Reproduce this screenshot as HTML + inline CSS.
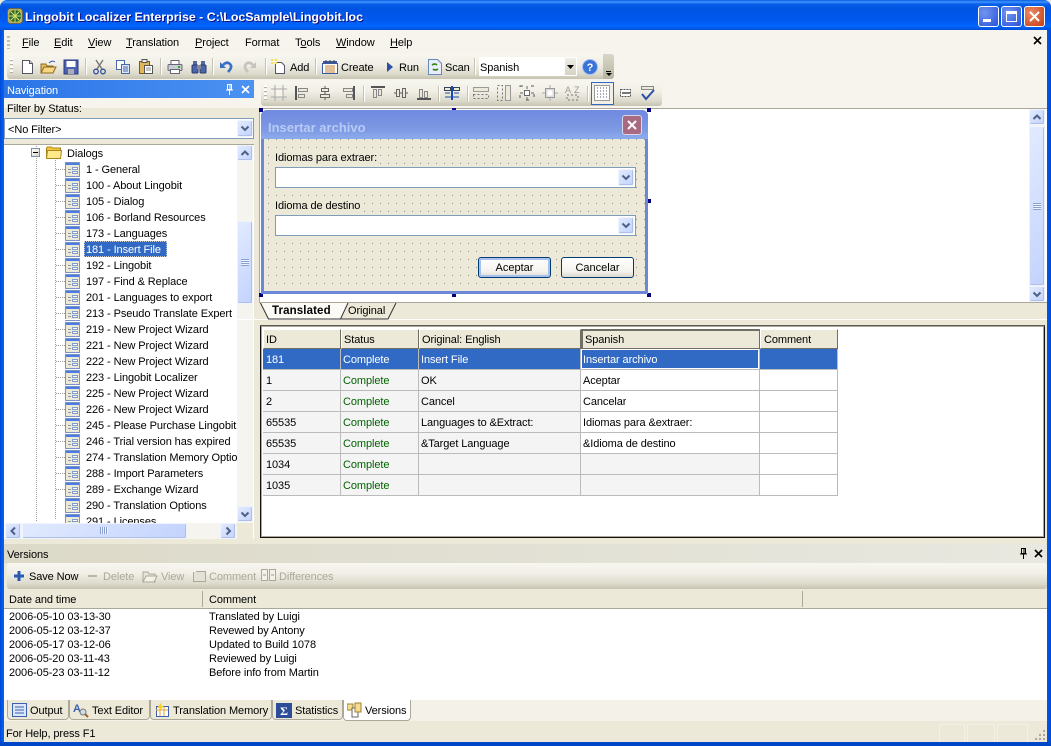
<!DOCTYPE html>
<html><head><meta charset="utf-8"><title>Lingobit Localizer Enterprise</title>
<style>
html,body{margin:0;padding:0;background:#ece9d8}
#w{position:relative;width:1051px;height:746px;overflow:hidden;background:#ece9d8;font-family:"Liberation Sans",sans-serif;font-size:11px;color:#000}
#w div,#w svg{position:absolute}
.t{white-space:nowrap;line-height:14px;height:14px;font-size:11px;letter-spacing:-.09px;margin-top:1px}
.c{white-space:nowrap;line-height:20px;height:20px;font-size:11px;letter-spacing:-.09px;overflow:hidden;box-sizing:border-box;padding-left:3px;margin-top:1px}
.g{color:#006400}.d{color:#aca899}
.sep{width:1px;background:#c5c2b8;border-right:1px solid #fff}
.tb{background:linear-gradient(#f7f6f0,#f1efe6 40%,#dcdacb 80%,#c6c3b2);border-radius:3px}
.sb{width:16px;height:16px;box-sizing:border-box;background:linear-gradient(135deg,#e1eafe,#c3d3fd);border:1px solid #eef3fe;border-radius:2px;box-shadow:inset -1px -1px 0 #aebfe8}
.th{background:#ece9d8;height:20px;box-sizing:border-box;border-top:1px solid #fff;border-left:1px solid #fff;border-right:1px solid #716f64;border-bottom:1px solid #716f64;line-height:19px;padding:1px 0 0 2px;white-space:nowrap;font-size:11px;letter-spacing:-.09px}
.h{width:4px;height:4px;background:#00007f}
.cb{box-sizing:border-box;background:#fff;border:1px solid #7f9db9}
.btn{box-sizing:border-box;border:1px solid #003c74;border-radius:3px;background:linear-gradient(#fff,#f4f3ee 70%,#dcd8ce);text-align:center;line-height:19px;padding-top:1px;white-space:nowrap;font-size:11px}
.di{left:65px;width:15px;height:15px;box-sizing:border-box;border:1px solid #7a94c4;background:
linear-gradient(#4a7ede,#4a7ede) 0 0/100% 2px no-repeat,
linear-gradient(#999,#999) 2px 6px/3px 1px no-repeat,
linear-gradient(#999,#999) 2px 9px/3px 1px no-repeat,
linear-gradient(#fff,#fff) 7px 5px/4px 1px no-repeat,
linear-gradient(#fff,#fff) 7px 9px/4px 1px no-repeat,
linear-gradient(#7f9cd0,#7f9cd0) 6px 4px/6px 3px no-repeat,
linear-gradient(#7f9cd0,#7f9cd0) 6px 8px/6px 3px no-repeat,#ece9d8}
.sf{top:724px;height:18px;box-sizing:border-box;border:1px solid #f3f1e6;border-bottom:none}
</style></head><body>
<svg width="0" height="0" style="position:absolute"><defs>
<symbol id="dn" viewBox="0 0 16 16"><path d="M4.5 6.5L8 10l3.5-3.5" fill="none" stroke="#4d6185" stroke-width="2"/></symbol>
<symbol id="up" viewBox="0 0 16 16"><path d="M4.5 10L8 6.5l3.5 3.5" fill="none" stroke="#4d6185" stroke-width="2"/></symbol>
<symbol id="lf" viewBox="0 0 16 16"><path d="M10 4.5L6.5 8l3.5 3.5" fill="none" stroke="#4d6185" stroke-width="2"/></symbol>
<symbol id="rt" viewBox="0 0 16 16"><path d="M6.5 4.5L10 8l-3.5 3.5" fill="none" stroke="#4d6185" stroke-width="2"/></symbol>
<symbol id="x" viewBox="0 0 9 9"><path d="M1 1l7 7M8 1L1 8" stroke="#000" stroke-width="1.6"/></symbol>
<symbol id="pin" viewBox="0 0 9 11"><path d="M2.5 .5h4v5h-4zM5 1v4M1 6h7M4.5 6v5" fill="none" stroke="#000"/></symbol>
</defs></svg>
<div id="w">
<!-- title bar -->
<div style="left:0;top:0;width:1051px;height:30px;background:linear-gradient(#0a5ae0,#3d95ff 2px,#0a5fe8 4px,#0054e3 8px,#0058ee 20px,#0066ff 26px,#0050d8 30px);border-radius:7px 7px 0 0"></div>
<svg style="left:7px;top:8px" width="16" height="16" viewBox="0 0 16 16"><rect x=".5" y=".5" width="15" height="15" rx="3" fill="#b8b060" stroke="#665"/><circle cx="8" cy="8" r="6" fill="#2a6a2a"/><path d="M8 2v12M2 8h12M4 4l8 8M12 4l-8 8" stroke="#d8e070"/></svg>
<div style="left:25px;top:9px;color:#fff;font-weight:bold;font-size:12.4px;line-height:16px;white-space:nowrap;text-shadow:1px 1px 0 #0f1089">Lingobit Localizer Enterprise - C:\LocSample\Lingobit.loc</div>
<div style="left:978px;top:6px;width:21px;height:21px;box-sizing:border-box;border:1px solid #fff;border-radius:3px;background:radial-gradient(circle at 30% 30%,#6f95f0,#2a52d8)"></div>
<div style="left:983px;top:19px;width:8px;height:3px;background:#fff"></div>
<div style="left:1001px;top:6px;width:21px;height:21px;box-sizing:border-box;border:1px solid #fff;border-radius:3px;background:radial-gradient(circle at 30% 30%,#6f95f0,#2a52d8)"></div>
<div style="left:1006px;top:11px;width:11px;height:11px;box-sizing:border-box;border:1px solid #fff;border-top-width:3px"></div>
<div style="left:1024px;top:6px;width:21px;height:21px;box-sizing:border-box;border:1px solid #fff;border-radius:3px;background:radial-gradient(circle at 30% 30%,#eb8a68,#c83c10)"></div>
<svg style="left:1029px;top:11px" width="11" height="11" viewBox="0 0 11 11"><path d="M1 1l9 9M10 1l-9 9" stroke="#fff" stroke-width="2"/></svg>
<!-- borders -->
<div style="left:0;top:30px;width:4px;height:716px;background:linear-gradient(90deg,#0048d0,#0058ee 50%,#0a60f0)"></div>
<div style="left:1047px;top:30px;width:4px;height:716px;background:linear-gradient(90deg,#0058ee,#0048d0)"></div>
<div style="left:0;top:742px;width:1051px;height:4px;background:#0046c8"></div>
<!-- menu area -->
<div style="left:4px;top:30px;width:1043px;height:78px;background:#f6f4ec"></div>
<div style="left:7px;top:36px;width:3px;height:13px;background:repeating-linear-gradient(#c2bfae 0 2px,transparent 2px 4px)"></div>
<div class="t" style="left:22px;top:35px"><u>F</u>ile</div>
<div class="t" style="left:54px;top:35px"><u>E</u>dit</div>
<div class="t" style="left:88px;top:35px"><u>V</u>iew</div>
<div class="t" style="left:126px;top:35px"><u>T</u>ranslation</div>
<div class="t" style="left:195px;top:35px"><u>P</u>roject</div>
<div class="t" style="left:245px;top:35px">Format</div>
<div class="t" style="left:295px;top:35px">T<u>o</u>ols</div>
<div class="t" style="left:336px;top:35px"><u>W</u>indow</div>
<div class="t" style="left:390px;top:35px"><u>H</u>elp</div>
<svg style="left:1033px;top:36px" width="9" height="9"><use href="#x"/></svg>
<!-- main toolbar -->
<div class="tb" style="left:7px;top:54px;width:607px;height:25px"></div>
<div style="left:603px;top:54px;width:11px;height:25px;background:linear-gradient(#d8d6c6,#b8b5a2);border-radius:0 3px 3px 0"></div>
<div style="left:606px;top:71px;width:5px;height:1px;background:#000"></div>
<svg style="left:606px;top:73px" width="6" height="4"><path d="M0 0h6L3 3z"/></svg>
<div style="left:10px;top:58px;width:3px;height:16px;background:repeating-linear-gradient(#fff 0 2px,#b5b2a0 2px 3px,transparent 3px 4px)"></div>
<svg style="left:19px;top:59px" width="16" height="16"><path d="M3.5 1.5h7l3 3v10h-10z" fill="#fff" stroke="#556"/><path d="M10.5 1.5v3h3" fill="#dde" stroke="#556"/></svg>
<svg style="left:40px;top:59px" width="17" height="16"><path d="M1 14V5h5l1 2h6v7z" fill="#e8c060" stroke="#8a6a20"/><path d="M1 14l3-6h12l-3 6z" fill="#f6d680" stroke="#8a6a20"/><path d="M9 4q3-3 6-1" fill="none" stroke="#3868c0"/></svg>
<svg style="left:63px;top:59px" width="16" height="16"><rect x="1" y="1" width="14" height="14" fill="#4a62b0" stroke="#2a3a80"/><rect x="3.5" y="2" width="9" height="6" fill="#fff"/><rect x="5" y="10" width="6" height="5" fill="#aab"/></svg>
<div class="sep" style="left:85px;top:58px;height:17px"></div>
<svg style="left:92px;top:59px" width="15" height="16"><path d="M4 1l6 9M11 1l-6 9" stroke="#777" stroke-width="1.4"/><circle cx="4" cy="12.5" r="2.3" fill="none" stroke="#3050a0" stroke-width="1.3"/><circle cx="11" cy="12.5" r="2.3" fill="none" stroke="#3050a0" stroke-width="1.3"/></svg>
<svg style="left:115px;top:59px" width="16" height="16"><rect x="1.5" y="1.5" width="8" height="9" fill="#fff" stroke="#4868a8"/><rect x="6.5" y="5.5" width="8" height="9" fill="#dfe8fa" stroke="#4868a8"/><path d="M8 8h5M8 10h5M8 12h5" stroke="#4868a8"/></svg>
<svg style="left:138px;top:58px" width="16" height="17"><rect x="1.5" y="3.5" width="10" height="12" fill="#e0b858" stroke="#7a5a18"/><rect x="4" y="1.5" width="5" height="3" fill="#eee" stroke="#555"/><rect x="6.5" y="7.5" width="8" height="8" fill="#fff" stroke="#555"/><path d="M8 10h5M8 12h5" stroke="#888"/></svg>
<div class="sep" style="left:160px;top:58px;height:17px"></div>
<svg style="left:167px;top:59px" width="16" height="16"><path d="M4 5V1.5h8V5" fill="#fff" stroke="#667"/><rect x="1" y="5.5" width="14" height="6" rx="1" fill="#c8ccd4" stroke="#667"/><rect x="3.5" y="10.5" width="9" height="4" fill="#fff" stroke="#667"/><rect x="11" y="7" width="2" height="2" fill="#2a2"/></svg>
<svg style="left:191px;top:59px" width="16" height="16"><rect x="2" y="2" width="4" height="4" fill="#556a98"/><rect x="10" y="2" width="4" height="4" fill="#556a98"/><rect x="1" y="6" width="6" height="8" rx="1" fill="#4a66a8" stroke="#2a3a70"/><rect x="9" y="6" width="6" height="8" rx="1" fill="#4a66a8" stroke="#2a3a70"/><rect x="6" y="6" width="4" height="4" fill="#889"/></svg>
<div class="sep" style="left:212px;top:58px;height:17px"></div>
<svg style="left:220px;top:59px" width="14" height="15"><path d="M3 6q4-4 7-1t-2 8" fill="none" stroke="#3870c8" stroke-width="2.6"/><path d="M0 3v6h6z" fill="#3870c8"/></svg>
<svg style="left:242px;top:59px" width="14" height="15"><path d="M11 6q-4-4-7-1t2 8" fill="none" stroke="#c4c4bc" stroke-width="2.6"/><path d="M14 3v6H8z" fill="#c4c4bc"/></svg>
<div class="sep" style="left:265px;top:58px;height:17px"></div>
<svg style="left:271px;top:59px" width="16" height="16"><path d="M4.5 3.5h6l3 3v8h-9z" fill="#fff" stroke="#556"/><path d="M0 0h6v5H0z" fill="#f4e060"/><path d="M3 0v5M0 2.5h6" stroke="#fff"/></svg>
<div class="t" style="left:290px;top:60px">Add</div>
<div class="sep" style="left:315px;top:58px;height:17px"></div>
<svg style="left:322px;top:60px" width="16" height="14"><rect x=".5" y="3.5" width="15" height="10" fill="#fff" stroke="#3a5aa8"/><rect x="1" y="1" width="14" height="3" fill="#3a5aa8"/><path d="M3 6h10M3 8h10M3 10h10M3 12h10" stroke="#c08030"/><path d="M4 0v3M8 0v3M12 0v3" stroke="#444"/></svg>
<div class="t" style="left:341px;top:60px">Create</div>
<svg style="left:386px;top:61px" width="8" height="12"><path d="M1 1l6 5-6 5z" fill="#2a50a8"/></svg>
<div class="t" style="left:399px;top:60px">Run</div>
<svg style="left:428px;top:59px" width="14" height="16"><path d="M.5.5h9l4 4v11H.5z" fill="#e8eefc" stroke="#6888b8"/><path d="M4 6q3-2 5 0M10 10q-3 2-5 0" fill="none" stroke="#3a8a18" stroke-width="1.8"/></svg>
<div class="t" style="left:445px;top:60px">Scan</div>
<div class="sep" style="left:474px;top:58px;height:17px"></div>
<div style="left:479px;top:57px;width:98px;height:19px;background:#fff"></div>
<div style="left:565px;top:58px;width:11px;height:17px;background:linear-gradient(#f0efe6,#d6d3c4)"></div>
<svg style="left:567px;top:65px" width="7" height="4"><path d="M0 0h7L3.5 4z"/></svg>
<div class="t" style="left:480px;top:60px">Spanish</div>
<svg style="left:582px;top:59px" width="16" height="16"><circle cx="8" cy="8" r="7.5" fill="#3a74d8" stroke="#a8c0ee"/><text x="8" y="12" font-size="11" font-weight="bold" fill="#fff" text-anchor="middle" font-family="Liberation Sans">?</text></svg>
<!-- design toolbar -->
<div class="tb" style="left:261px;top:81px;width:401px;height:25px"></div>
<div style="left:264px;top:85px;width:3px;height:16px;background:repeating-linear-gradient(#fff 0 2px,#b5b2a0 2px 3px,transparent 3px 4px)"></div>
<svg style="left:271px;top:85px" width="16" height="16"><rect x="4" y="4" width="8" height="8" fill="#f6f4ec" stroke="#777"/><path d="M0 4h16M0 12h16M4 0v16M12 0v16" stroke="#aaa"/></svg>
<svg style="left:294px;top:85px" width="16" height="16"><path d="M2 1v14" stroke="#555" stroke-width="2"/><rect x="4.5" y="3.5" width="9" height="3" fill="#ece9d8" stroke="#888"/><rect x="4.5" y="9.5" width="6" height="3" fill="#ece9d8" stroke="#888"/></svg>
<svg style="left:317px;top:85px" width="16" height="16"><path d="M8 1v14" stroke="#555"/><rect x="4.5" y="3.5" width="7" height="3" fill="#ece9d8" stroke="#666"/><rect x="3.5" y="9.5" width="9" height="3" fill="#ece9d8" stroke="#666"/></svg>
<svg style="left:340px;top:85px" width="16" height="16"><path d="M14 1v14" stroke="#555" stroke-width="2"/><rect x="3.5" y="3.5" width="9" height="3" fill="#ece9d8" stroke="#888"/><rect x="6.5" y="9.5" width="6" height="3" fill="#ece9d8" stroke="#888"/></svg>
<div class="sep" style="left:363px;top:86px;height:16px"></div>
<svg style="left:370px;top:85px" width="16" height="16"><path d="M1 2h14" stroke="#555" stroke-width="2"/><rect x="3.5" y="4.5" width="3" height="8" fill="#ece9d8" stroke="#888"/><rect x="8.5" y="4.5" width="3" height="6" fill="#ece9d8" stroke="#888"/></svg>
<svg style="left:393px;top:85px" width="16" height="16"><path d="M1 8h14" stroke="#555"/><rect x="3.5" y="4.5" width="3" height="7" fill="#ece9d8" stroke="#666"/><rect x="9.5" y="3.5" width="3" height="9" fill="#ece9d8" stroke="#666"/></svg>
<svg style="left:416px;top:85px" width="16" height="16"><path d="M1 14h14" stroke="#555" stroke-width="2"/><rect x="3.5" y="4.5" width="3" height="8" fill="#ece9d8" stroke="#888"/><rect x="8.5" y="6.5" width="3" height="6" fill="#ece9d8" stroke="#888"/></svg>
<div class="sep" style="left:438px;top:86px;height:16px"></div>
<svg style="left:444px;top:85px" width="16" height="16"><rect x=".5" y="2.5" width="6" height="3" fill="#ece9d8" stroke="#345"/><rect x="9.5" y="2.5" width="6" height="3" fill="#ece9d8" stroke="#345"/><path d="M8 1v14" stroke="#1a4ab0" stroke-width="2"/><path d="M1 8h5M10 8h5M1 12h14" stroke="#1a4ab0"/></svg>
<div class="sep" style="left:467px;top:86px;height:16px"></div>
<svg style="left:473px;top:85px" width="16" height="16"><rect x=".5" y="2.5" width="15" height="4" fill="#ece9d8" stroke="#999"/><rect x=".5" y="9.5" width="15" height="4" fill="none" stroke="#777" stroke-dasharray="2 2"/></svg>
<svg style="left:496px;top:85px" width="16" height="16"><rect x="9.5" y=".5" width="5" height="15" fill="#ece9d8" stroke="#999"/><rect x="1.5" y=".5" width="5" height="15" fill="none" stroke="#777" stroke-dasharray="2 2"/></svg>
<svg style="left:519px;top:85px" width="16" height="16"><rect x="1" y="1" width="14" height="14" fill="none" stroke="#555" stroke-dasharray="3 8"/><rect x="5.5" y="5.5" width="5" height="5" fill="#fff" stroke="#666"/><path d="M8 1v3M8 12v3M1 8h3M12 8h3" stroke="#666"/></svg>
<svg style="left:542px;top:85px" width="16" height="16"><rect x="3.5" y="3.5" width="9" height="9" fill="#ddd" stroke="#999"/><rect x="5.5" y="5.5" width="5" height="5" fill="#fff"/><path d="M8 0v3M8 13v3M0 8h3M13 8h3" stroke="#aaa"/></svg>
<svg style="left:565px;top:85px" width="16" height="16"><text x="0" y="8" font-size="9" fill="#999" font-family="Liberation Sans">A</text><text x="9" y="8" font-size="9" fill="#999" font-family="Liberation Sans">Z</text><path d="M2 10h11v5H2z" fill="none" stroke="#777" stroke-dasharray="2 2"/></svg>
<div class="sep" style="left:587px;top:86px;height:16px"></div>
<div style="left:591px;top:82px;width:23px;height:23px;box-sizing:border-box;border:1px solid #316ac5;background:#f1efe6"></div>
<svg style="left:594px;top:85px" width="16" height="16"><rect x=".5" y=".5" width="15" height="15" fill="#fff" stroke="#999"/><path d="M3 3h10M3 6h10M3 9h10M3 12h10" stroke="#556" stroke-dasharray="1 2"/></svg>
<svg style="left:618px;top:85px" width="16" height="16"><rect x="2.5" y="4.5" width="10" height="7" fill="#fff" stroke="#555" stroke-dasharray="2 1"/><path d="M4 8h8" stroke="#777" stroke-width="2"/></svg>
<svg style="left:640px;top:85px" width="16" height="16"><rect x="1.5" y="1.5" width="12" height="3" fill="#ece9d8" stroke="#888"/><path d="M2 9l4 5 8-9" fill="none" stroke="#2a4ea8" stroke-width="2"/></svg>
<!-- nav panel -->
<div style="left:4px;top:80px;width:250px;height:18px;background:linear-gradient(90deg,#2a74e8,#4c92f2)"></div>
<div class="t" style="left:7px;top:83px;color:#fff">Navigation</div>
<svg style="left:225px;top:84px" width="9" height="11"><use href="#pin" style="filter:invert(1)"/></svg>
<svg style="left:241px;top:85px" width="9" height="9"><use href="#x" style="filter:invert(1)"/></svg>
<div class="t" style="left:7px;top:101px">Filter by Status:</div>
<div class="cb" style="left:4px;top:118px;width:250px;height:21px"></div>
<div class="t" style="left:8px;top:122px">&lt;No Filter&gt;</div>
<div class="sb" style="left:237px;top:120px;height:17px"></div><svg style="left:237px;top:120px" width="16" height="16"><use href="#dn"/></svg>
<!-- tree -->
<div style="left:4px;top:144px;width:250px;height:395px;background:#fff;border-top:1px solid #aca899;box-sizing:border-box;overflow:hidden"></div>
<div style="left:36px;top:146px;width:1px;height:375px;background:repeating-linear-gradient(#999 0 1px,transparent 1px 2px)"></div>
<div style="left:55px;top:160px;width:1px;height:360px;background:repeating-linear-gradient(#999 0 1px,transparent 1px 2px)"></div>
<div style="left:31px;top:148px;width:9px;height:9px;box-sizing:border-box;border:1px solid #7a8ea8;background:linear-gradient(135deg,#fff,#d8d4c8)"></div>
<div style="left:33px;top:152px;width:5px;height:1px;background:#000"></div>
<svg style="left:46px;top:146px" width="16" height="13"><path d="M.5 12V2l1-1h4l1 1h8v10z" fill="#f2c838" stroke="#a88420"/><path d="M.5 12.5l1-8h14l-1 8z" fill="#ffe98a" stroke="#a88420"/></svg>
<div class="t" style="left:67px;top:146px">Dialogs</div>
<div style="left:56px;top:169px;width:9px;height:335px;background:repeating-linear-gradient(#999 0 1px,transparent 1px 2px,transparent 2px 16px);mask-image:repeating-linear-gradient(90deg,#000 0 1px,transparent 1px 2px)"></div>
<div class="di" style="top:162px"></div><div class="t" style="left:86px;top:162px">1 - General</div>
<div class="di" style="top:178px"></div><div class="t" style="left:86px;top:178px">100 - About Lingobit</div>
<div class="di" style="top:194px"></div><div class="t" style="left:86px;top:194px">105 - Dialog</div>
<div class="di" style="top:210px"></div><div class="t" style="left:86px;top:210px">106 - Borland Resources</div>
<div class="di" style="top:226px"></div><div class="t" style="left:86px;top:226px">173 - Languages</div>
<div class="di" style="top:242px"></div><div style="left:84px;top:241px;width:83px;height:16px;background:#316ac5;outline:1px dotted #ccc;outline-offset:-1px"></div><div class="t" style="left:86px;top:242px;color:#fff">181 - Insert File</div>
<div class="di" style="top:258px"></div><div class="t" style="left:86px;top:258px">192 - Lingobit</div>
<div class="di" style="top:274px"></div><div class="t" style="left:86px;top:274px">197 - Find &amp; Replace</div>
<div class="di" style="top:290px"></div><div class="t" style="left:86px;top:290px">201 - Languages to export</div>
<div class="di" style="top:306px"></div><div class="t" style="left:86px;top:306px">213 - Pseudo Translate Expert</div>
<div class="di" style="top:322px"></div><div class="t" style="left:86px;top:322px">219 - New Project Wizard</div>
<div class="di" style="top:338px"></div><div class="t" style="left:86px;top:338px">221 - New Project Wizard</div>
<div class="di" style="top:354px"></div><div class="t" style="left:86px;top:354px">222 - New Project Wizard</div>
<div class="di" style="top:370px"></div><div class="t" style="left:86px;top:370px">223 - Lingobit Localizer</div>
<div class="di" style="top:386px"></div><div class="t" style="left:86px;top:386px">225 - New Project Wizard</div>
<div class="di" style="top:402px"></div><div class="t" style="left:86px;top:402px">226 - New Project Wizard</div>
<div class="di" style="top:418px"></div><div class="t" style="left:86px;top:418px">245 - Please Purchase Lingobit</div>
<div class="di" style="top:434px"></div><div class="t" style="left:86px;top:434px">246 - Trial version has expired</div>
<div class="di" style="top:450px"></div><div class="t" style="left:86px;top:450px;width:151px;overflow:hidden">274 - Translation Memory Options</div>
<div class="di" style="top:466px"></div><div class="t" style="left:86px;top:466px">288 - Import Parameters</div>
<div class="di" style="top:482px"></div><div class="t" style="left:86px;top:482px">289 - Exchange Wizard</div>
<div class="di" style="top:498px"></div><div class="t" style="left:86px;top:498px">290 - Translation Options</div>
<div style="left:60px;top:514px;width:177px;height:9px;overflow:hidden"><div class="di" style="left:5px;top:0"></div><div class="t" style="left:26px;top:0">291 - Licenses</div></div>
<!-- tree scrollbars -->
<div style="left:237px;top:145px;width:16px;height:378px;background:#f5f4ee"></div>
<div class="sb" style="left:237px;top:145px"></div><svg style="left:237px;top:145px" width="16" height="16"><use href="#up"/></svg>
<div class="sb" style="left:237px;top:221px;height:83px"></div>
<div style="left:241px;top:259px;width:8px;height:7px;background:repeating-linear-gradient(#8aa0d0 0 1px,#eef3fe 1px 2px)"></div>
<div class="sb" style="left:237px;top:506px"></div><svg style="left:237px;top:506px" width="16" height="16"><use href="#dn"/></svg>
<div style="left:5px;top:523px;width:248px;height:16px;background:#f5f4ee"></div>
<div class="sb" style="left:5px;top:523px"></div><svg style="left:5px;top:523px" width="16" height="16"><use href="#lf"/></svg>
<div class="sb" style="left:22px;top:523px;width:165px"></div>
<div style="left:100px;top:527px;width:8px;height:7px;background:repeating-linear-gradient(90deg,#8aa0d0 0 1px,#eef3fe 1px 2px)"></div>
<div class="sb" style="left:220px;top:523px"></div><svg style="left:220px;top:523px" width="16" height="16"><use href="#rt"/></svg>
<div style="left:237px;top:523px;width:16px;height:16px;background:#ece9d8"></div>
<!-- design surface -->
<div style="left:259px;top:108px;width:788px;height:195px;background:#fff;box-sizing:border-box;border-top:1px solid #aca899;border-bottom:1px solid #aca899;border-left:1px solid #aca899"></div>
<div class="h" style="left:259px;top:108px"></div><div class="h" style="left:452px;top:108px"></div><div class="h" style="left:647px;top:108px"></div>
<div class="h" style="left:647px;top:199px"></div><div class="h" style="left:259px;top:293px"></div><div class="h" style="left:452px;top:293px"></div><div class="h" style="left:647px;top:293px"></div>
<!-- dialog -->
<div style="left:261px;top:110px;width:387px;height:184px;border-radius:6px 6px 0 0;background:#6c86d8"></div>
<div style="left:261px;top:110px;width:387px;height:29px;border-radius:6px 6px 0 0;background:linear-gradient(#6f8ae0,#7590e0 30%,#7e9ae4 70%,#8dacec)"></div>
<div style="left:264px;top:139px;width:381px;height:152px;background:#ece9d8"></div>
<svg style="left:264px;top:139px" width="381" height="152"><defs><pattern id="dots" width="8" height="8" patternUnits="userSpaceOnUse"><rect x="4" y="0" width="1" height="1" fill="#8f8d80"/></pattern></defs><rect width="381" height="152" fill="url(#dots)"/></svg>
<div style="left:268px;top:120px;color:#b8caf6;font-weight:bold;font-size:13px;line-height:15px;white-space:nowrap">Insertar archivo</div>
<div style="left:622px;top:115px;width:20px;height:20px;box-sizing:border-box;border:1px solid #d8d8e8;border-radius:3px;background:#a86a80"></div>
<svg style="left:627px;top:120px" width="10" height="10"><path d="M1 1l8 8M9 1l-8 8" stroke="#fff" stroke-width="2"/></svg>
<div class="t" style="left:275px;top:150px;background:#ece9d8">Idiomas para extraer:</div>
<div class="cb" style="left:275px;top:167px;width:361px;height:21px"></div>
<div class="sb" style="left:618px;top:169px;height:17px"></div><svg style="left:618px;top:169px" width="16" height="16"><use href="#dn"/></svg>
<div class="t" style="left:275px;top:198px;background:#ece9d8">Idioma de destino</div>
<div class="cb" style="left:275px;top:215px;width:361px;height:21px"></div>
<div class="sb" style="left:618px;top:217px;height:17px"></div><svg style="left:618px;top:217px" width="16" height="16"><use href="#dn"/></svg>
<div class="btn" style="left:478px;top:257px;width:73px;height:21px;box-shadow:inset 0 0 0 2px #a8c0ee">Aceptar</div>
<div class="btn" style="left:561px;top:257px;width:73px;height:21px">Cancelar</div>
<!-- right scroll -->
<div style="left:1029px;top:109px;width:16px;height:193px;background:#f5f4ee"></div>
<div class="sb" style="left:1029px;top:109px"></div><svg style="left:1029px;top:109px" width="16" height="16"><use href="#up"/></svg>
<div class="sb" style="left:1029px;top:126px;height:160px"></div>
<div style="left:1033px;top:203px;width:8px;height:7px;background:repeating-linear-gradient(#8aa0d0 0 1px,#eef3fe 1px 2px)"></div>
<div class="sb" style="left:1029px;top:286px"></div><svg style="left:1029px;top:286px" width="16" height="16"><use href="#dn"/></svg>
<!-- tabs -->
<div style="left:4px;top:319px;width:1043px;height:1px;background:#fff"></div>
<svg style="left:255px;top:300px" width="150" height="21"><path d="M5.500 3l8 16h72l7.500-16" fill="#fbfaf5" stroke="#333"/><path d="M85.500 19h47.500l8-16" fill="none" stroke="#333"/></svg>
<div class="t" style="left:272px;top:303px;font-weight:bold;font-size:11.500px;letter-spacing:.12px">Translated</div>
<div class="t" style="left:348px;top:303px">Original</div>
<!-- grid -->
<div style="left:260px;top:325px;width:785px;height:213px;box-sizing:border-box;border:1px solid #111;border-top:2px solid #5c5a50;background:#fff;outline:1px solid #aca899;outline-offset:-2px"></div>
<div class="th" style="left:263px;top:329px;width:78px">ID</div>
<div class="th" style="left:341px;top:329px;width:78px">Status</div>
<div class="th" style="left:419px;top:329px;width:162px">Original: English</div>
<div class="th" style="left:581px;top:329px;width:179px;border-top:2px solid #716f64;border-left:2px solid #716f64;padding-top:0">Spanish</div>
<div class="th" style="left:760px;top:329px;width:78px;padding-left:3px">Comment</div>
<div style="left:263px;top:349px;width:575px;height:20px;background:#316ac5"></div>
<div style="left:263px;top:370px;width:318px;height:125px;background:#f4f4f4"></div>
<div style="left:581px;top:454px;width:179px;height:41px;background:#f4f4f4"></div>
<div style="left:263px;top:369px;width:575px;height:1px;background:#bbb"></div>
<div style="left:263px;top:390px;width:575px;height:1px;background:#bbb"></div>
<div style="left:263px;top:411px;width:575px;height:1px;background:#bbb"></div>
<div style="left:263px;top:432px;width:575px;height:1px;background:#bbb"></div>
<div style="left:263px;top:453px;width:575px;height:1px;background:#bbb"></div>
<div style="left:263px;top:474px;width:575px;height:1px;background:#bbb"></div>
<div style="left:263px;top:495px;width:575px;height:1px;background:#bbb"></div>
<div style="left:340px;top:349px;width:1px;height:147px;background:#bbb"></div>
<div style="left:418px;top:349px;width:1px;height:147px;background:#bbb"></div>
<div style="left:580px;top:349px;width:1px;height:147px;background:#bbb"></div>
<div style="left:759px;top:349px;width:1px;height:147px;background:#bbb"></div>
<div style="left:837px;top:349px;width:1px;height:147px;background:#bbb"></div>
<div style="left:581px;top:349px;width:178px;height:20px;box-sizing:border-box;background:#316ac5;border:1px solid #fff"></div>
<div class="c" style="left:263px;top:349px;color:#fff">181</div><div class="c" style="left:340px;top:349px;color:#fff">Complete</div><div class="c" style="left:418px;top:349px;color:#fff">Insert File</div><div class="c" style="left:580px;top:349px;color:#fff">Insertar archivo</div>
<div class="c" style="left:263px;top:370px">1</div><div class="c g" style="left:340px;top:370px">Complete</div><div class="c" style="left:418px;top:370px">OK</div><div class="c" style="left:580px;top:370px">Aceptar</div>
<div class="c" style="left:263px;top:391px">2</div><div class="c g" style="left:340px;top:391px">Complete</div><div class="c" style="left:418px;top:391px">Cancel</div><div class="c" style="left:580px;top:391px">Cancelar</div>
<div class="c" style="left:263px;top:412px">65535</div><div class="c g" style="left:340px;top:412px">Complete</div><div class="c" style="left:418px;top:412px">Languages to &amp;Extract:</div><div class="c" style="left:580px;top:412px">Idiomas para &amp;extraer:</div>
<div class="c" style="left:263px;top:433px">65535</div><div class="c g" style="left:340px;top:433px">Complete</div><div class="c" style="left:418px;top:433px">&amp;Target Language</div><div class="c" style="left:580px;top:433px">&amp;Idioma de destino</div>
<div class="c" style="left:263px;top:454px">1034</div><div class="c g" style="left:340px;top:454px">Complete</div>
<div class="c" style="left:263px;top:475px">1035</div><div class="c g" style="left:340px;top:475px">Complete</div>
<!-- versions -->
<div style="left:4px;top:544px;width:1043px;height:19px;background:linear-gradient(90deg,#dcd9c8,#e8e8e0)"></div>
<div class="t" style="left:7px;top:547px">Versions</div>
<svg style="left:1019px;top:548px" width="9" height="11"><use href="#pin"/></svg>
<svg style="left:1034px;top:549px" width="9" height="9"><use href="#x"/></svg>
<div class="tb" style="left:7px;top:563px;width:1040px;height:26px"></div>
<svg style="left:14px;top:571px" width="10" height="10"><path d="M5 0v10M0 5h10" stroke="#2a5ab0" stroke-width="3"/></svg>
<div class="t" style="left:29px;top:569px">Save Now</div>
<div style="left:88px;top:575px;width:9px;height:2px;background:#b8b8a8"></div>
<div class="t d" style="left:103px;top:569px">Delete</div>
<svg style="left:142px;top:568px" width="16" height="15"><path d="M1 14V4h5l1 2h6v8z" fill="#e8e6da" stroke="#aca899"/><path d="M1 14l3-6h11l-3 6z" fill="#f4f2e8" stroke="#aca899"/></svg>
<div class="t d" style="left:161px;top:569px">View</div>
<svg style="left:191px;top:568px" width="16" height="15"><rect x="2.5" y="3.500" width="12" height="10" fill="#e4e2d6" stroke="#aca899"/><path d="M0 0h5v4H0z" fill="#f4f2e8"/></svg>
<div class="t d" style="left:209px;top:569px">Comment</div>
<svg style="left:261px;top:569px" width="16" height="13"><rect x=".5" y=".5" width="6" height="11" fill="#f4f2e8" stroke="#aca899"/><rect x="8.5" y=".5" width="6" height="11" fill="#f4f2e8" stroke="#aca899"/><path d="M2 6h3M10 6h3" stroke="#999"/></svg>
<div class="t d" style="left:279px;top:569px">Differences</div>
<div style="left:4px;top:590px;width:1043px;height:19px;background:#ece9d8;border-bottom:1px solid #aca899;box-sizing:border-box"></div>
<div class="t" style="left:9px;top:592px">Date and time</div>
<div style="left:202px;top:591px;width:1px;height:16px;background:#aca899"></div>
<div class="t" style="left:209px;top:592px">Comment</div>
<div style="left:802px;top:591px;width:1px;height:16px;background:#aca899"></div>
<div style="left:4px;top:609px;width:1043px;height:91px;background:#fff"></div>
<div class="t" style="left:9px;top:609px">2006-05-10 03-13-30</div><div class="t" style="left:209px;top:609px">Translated by Luigi</div>
<div class="t" style="left:9px;top:623px">2006-05-12 03-12-37</div><div class="t" style="left:209px;top:623px">Revewed by Antony</div>
<div class="t" style="left:9px;top:637px">2006-05-17 03-12-06</div><div class="t" style="left:209px;top:637px">Updated to Build 1078</div>
<div class="t" style="left:9px;top:651px">2006-05-20 03-11-43</div><div class="t" style="left:209px;top:651px">Reviewed by Luigi</div>
<div class="t" style="left:9px;top:665px">2006-05-23 03-11-12</div><div class="t" style="left:209px;top:665px">Before info from Martin</div>
<!-- bottom tabs -->
<div style="left:4px;top:700px;width:1043px;height:21px;background:#f3f1e8"></div>
<div style="left:4px;top:721px;width:1043px;height:21px;background:#ece9d8"></div>
<div style="left:7px;top:700px;width:62px;height:20px;box-sizing:border-box;border:1px solid #aca899;border-top:none;border-radius:0 0 4px 4px;background:#ece9d8"></div>
<div style="left:69px;top:700px;width:81px;height:20px;box-sizing:border-box;border:1px solid #aca899;border-top:none;border-radius:0 0 4px 4px;background:#ece9d8"></div>
<div style="left:150px;top:700px;width:122px;height:20px;box-sizing:border-box;border:1px solid #aca899;border-top:none;border-radius:0 0 4px 4px;background:#ece9d8"></div>
<div style="left:272px;top:700px;width:71px;height:20px;box-sizing:border-box;border:1px solid #aca899;border-top:none;border-radius:0 0 4px 4px;background:#ece9d8"></div>
<div style="left:343px;top:700px;width:68px;height:21px;box-sizing:border-box;border:1px solid #aca899;border-top:none;border-radius:0 0 4px 4px;background:#fff"></div>
<svg style="left:12px;top:703px" width="15" height="14"><rect x=".5" y=".5" width="14" height="13" fill="#dce6fa" stroke="#3a62b0"/><path d="M3 4h9M3 7h9M3 10h9" stroke="#3a62b0"/></svg>
<div class="t" style="left:30px;top:703px">Output</div>
<svg style="left:73px;top:702px" width="16" height="16"><text x="0" y="10" font-size="11" font-weight="bold" fill="#3a62b0" font-family="Liberation Sans">A</text><circle cx="10" cy="10" r="3" fill="#cde" stroke="#777"/><path d="M12 12l3 3" stroke="#a86020" stroke-width="2"/></svg>
<div class="t" style="left:92px;top:703px">Text Editor</div>
<svg style="left:154px;top:702px" width="16" height="16"><rect x="2.5" y="4.5" width="12" height="10" fill="#fff" stroke="#3a62b0"/><path d="M2 8h12M6 5v9M10 5v9" stroke="#e0a040"/><path d="M8 0L3 6h3L4 10l6-6H7z" fill="#f0d020"/></svg>
<div class="t" style="left:173px;top:703px">Translation Memory</div>
<svg style="left:276px;top:703px" width="16" height="15"><rect width="16" height="15" fill="#2c4e98"/><text x="8" y="12" font-size="12" font-weight="bold" fill="#fff" text-anchor="middle" font-family="Liberation Serif">Σ</text></svg>
<div class="t" style="left:295px;top:703px">Statistics</div>
<svg style="left:347px;top:702px" width="16" height="16"><path d="M0 2h6v6H0z" fill="#f4dc90" stroke="#a08030"/><path d="M5 6h6v9H5z" fill="#fff" stroke="#666"/><path d="M8 1h6v9H8z" fill="#f4dc90" stroke="#a08030"/></svg>
<div class="t" style="left:365px;top:703px">Versions</div>
<!-- status bar -->
<div class="t" style="left:6px;top:726px">For Help, press F1</div>
<div class="sf" style="left:939px;width:26px"></div><div class="sf" style="left:967px;width:28px"></div><div class="sf" style="left:997px;width:31px"></div>
<svg style="left:1035px;top:729px" width="11" height="11"><path d="M8 1h2v2H8zM8 5h2v2H8zM4 5h2v2H4zM8 9h2v2H8zM4 9h2v2H4zM0 9h2v2H0z" fill="#aca899"/></svg>
</div>
</body></html>
